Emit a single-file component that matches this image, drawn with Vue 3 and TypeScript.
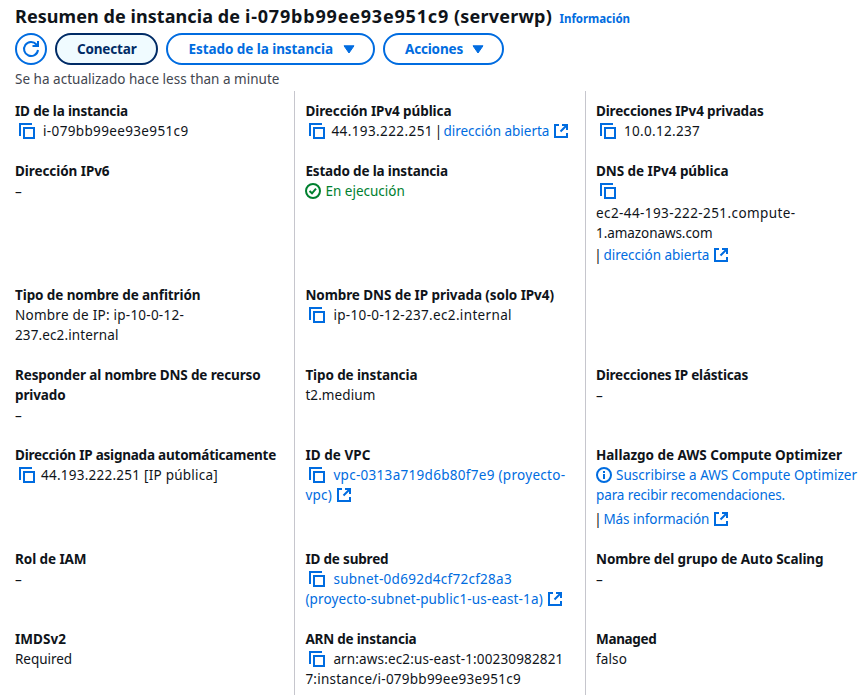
<script setup lang="ts">
type Kind = 'text' | 'link' | 'ok' | 'bar' | 'dash' | 'copy' | 'external' | 'info' | 'check'
interface Part {
  kind: Kind
  text?: string
  width?: number
  gap?: number
}
interface Line {
  parts: Part[]
  above?: number
}
interface Field {
  label: [string, number][]
  lines: Line[]
}

const t = (text: string, width: number, gap = 0): Part => ({ kind: 'text', text, width, gap })
const a = (text: string, width: number, gap = 0): Part => ({ kind: 'link', text, width, gap })
const bar = (gap = 0): Part => ({ kind: 'bar', text: '|', gap })
const icon = (kind: Kind, gap = 0): Part => ({ kind, gap })
const line = (...parts: Part[]): Line => ({ parts })
const spaced = (above: number, ...parts: Part[]): Line => ({ parts, above })
const dash: Line = line({ kind: 'dash', text: '–' })

// Tracks a run of text so that it fills its nominal width.
const vFit = {
  mounted(el: HTMLElement, binding: { value?: number }) {
    if (!binding.value) return
    const natural = el.getBoundingClientRect().width
    const count = (el.textContent ?? '').length
    if (count > 1) el.style.letterSpacing = `${(binding.value - natural) / count}px`
  },
}

const title: [string, number][] = [
  ['Resumen de instancia de', 225],
  ['i-079bb99ee93e951c9', 204],
  ['(serverwp)', 98],
]

const fields: Field[] = [
  { label: [['ID de la instancia', 113]], lines: [line(icon('copy', 4), t('i-079bb99ee93e951c9', 145.5, 8))] },
  {
    label: [['Dirección IPv4 pública', 146]],
    lines: [line(icon('copy', 4), t('44.193.222.251', 101.5, 6), bar(3.5), a('dirección abierta', 106, 3), icon('external', 4.5))],
  },
  { label: [['Direcciones IPv4 privadas', 167.5]], lines: [line(icon('copy', 4), t('10.0.12.237', 76, 8))] },

  { label: [['Dirección IPv6', 94.5]], lines: [dash] },
  {
    label: [['Estado de la instancia', 142.5]],
    lines: [line(icon('check'), { kind: 'ok', text: 'En ejecución', width: 79.5, gap: 4 })],
  },
  {
    label: [['DNS de IPv4 pública', 132.5]],
    lines: [
      line(icon('copy', 4)),
      spaced(2, t('ec2-44-193-222-251.compute-', 199.5)),
      line(t('1.amazonaws.com', 116.5)),
      spaced(2, bar(), a('dirección abierta', 106, 3.4), icon('external', 4.6)),
    ],
  },

  {
    label: [['Tipo de nombre de anfitrión', 185.5]],
    lines: [line(t('Nombre de IP: ip-10-0-12-', 169)), line(t('237.ec2.internal', 103.5))],
  },
  {
    label: [['Nombre DNS de IP privada (solo IPv4)', 248.5]],
    lines: [line(icon('copy', 4), t('ip-10-0-12-237.ec2.internal', 178.5, 8))],
  },
  { label: [], lines: [] },

  { label: [['Responder al nombre DNS de recurso', 245.5], ['privado', 50.5]], lines: [dash] },
  { label: [['Tipo de instancia', 112]], lines: [line(t('t2.medium', 70))] },
  { label: [['Direcciones IP elásticas', 152]], lines: [dash] },

  {
    label: [['Dirección IP asignada automáticamente', 261]],
    lines: [line(icon('copy', 4), t('44.193.222.251 [IP pública]', 177, 6))],
  },
  {
    label: [['ID de VPC', 65]],
    lines: [
      line(icon('copy', 4), a('vpc-0313a719d6b80f7e9 (proyecto-', 232, 8)),
      line(a('vpc)', 26.5), icon('external', 5)),
    ],
  },
  {
    label: [['Hallazgo de AWS Compute Optimizer', 246]],
    lines: [
      line(icon('info'), a('Suscribirse a AWS Compute Optimizer', 241, 4)),
      line(a('para recibir recomendaciones.', 189)),
      spaced(4, bar(), a('Más información', 106, 3.4), icon('external', 4.6)),
    ],
  },

  { label: [['Rol de IAM', 71.5]], lines: [dash] },
  {
    label: [['ID de subred', 83]],
    lines: [
      line(icon('copy', 4), a('subnet-0d692d4cf72cf28a3', 178.5, 8)),
      line(a('(proyecto-subnet-public1-us-east-1a)', 237.5), icon('external', 5)),
    ],
  },
  { label: [['Nombre del grupo de Auto Scaling', 227.5]], lines: [dash] },

  { label: [['IMDSv2', 51]], lines: [line(t('Required', 57))] },
  {
    label: [['ARN de instancia', 111]],
    lines: [
      line(icon('copy', 4), t('arn:aws:ec2:us-east-1:00230982821', 230, 8)),
      line(t('7:instance/i-079bb99ee93e951c9', 215.5)),
    ],
  },
  { label: [['Managed', 60.5]], lines: [line(t('falso', 31))] },
]
</script>

<template>
  <main class="page">
    <header>
      <div class="heading">
        <h1><span v-for="[text, width] in title" :key="text" v-fit="width">{{ text }}</span></h1>
        <a class="info-link"><span v-fit="70.5">Información</span></a>
      </div>
      <div class="actions">
        <button class="btn round" aria-label="Actualizar">
          <svg width="18" height="18" viewBox="0 0 18 18" fill="none" stroke="currentColor" stroke-width="2">
            <path d="M16 10A7 7 0 1 1 14.4 4.5L16 6.2" />
            <path d="M16 1V6H10.5" />
          </svg>
        </button>
        <button class="btn connect"><span v-fit="59.5">Conectar</span></button>
        <button class="btn state">
          <span v-fit="144.5">Estado de la instancia</span>
          <svg width="12" height="9" viewBox="0 0 12 9"><path d="M1 .8h10L6 8z" fill="currentColor" stroke="currentColor" stroke-linejoin="round" /></svg>
        </button>
        <button class="btn menu">
          <span v-fit="58">Acciones</span>
          <svg width="12" height="9" viewBox="0 0 12 9"><path d="M1 .8h10L6 8z" fill="currentColor" stroke="currentColor" stroke-linejoin="round" /></svg>
        </button>
      </div>
      <p class="updated"><span v-fit="264.5">Se ha actualizado hace less than a minute</span></p>
    </header>

    <section class="grid">
      <div v-for="(field, i) in fields" :key="i" class="cell">
        <div v-for="[text, width] in field.label" :key="text" class="line label">
          <span v-fit="width">{{ text }}</span>
        </div>
        <div v-for="(row, j) in field.lines" :key="j" class="line" :style="{ marginTop: (row.above ?? 0) + 'px' }">
          <span v-for="(part, k) in row.parts" :key="k" class="part" :style="{ marginLeft: (part.gap ?? 0) + 'px' }">
            <svg v-if="part.kind === 'copy'" class="blue" width="16" height="16" viewBox="0 0 16 16" fill="none" stroke="currentColor" stroke-width="2">
              <path d="M1 13V1H13" />
              <path d="M5 5H15V15H5Z" />
            </svg>
            <svg v-else-if="part.kind === 'external'" class="blue" width="14" height="14" viewBox="0 0 14 14" fill="none" stroke="currentColor" stroke-width="2">
              <path d="M5 1H1V13H13V9" />
              <path d="M8 1H13V6M13 1L6.5 7.5" />
            </svg>
            <svg v-else-if="part.kind === 'info'" class="blue" width="16" height="16" viewBox="0 0 16 16" fill="none" stroke="currentColor" stroke-width="2">
              <circle cx="8" cy="8" r="7" />
              <path d="M8 4V6M8 7V12" />
            </svg>
            <svg v-else-if="part.kind === 'check'" class="green" width="16" height="16" viewBox="0 0 16 16" fill="none" stroke="currentColor" stroke-width="2">
              <circle cx="8" cy="8" r="7" />
              <path d="M4.5 8L7 10.3L11 5.6" />
            </svg>
            <span v-else v-fit="part.width" :class="part.kind">{{ part.text }}</span>
          </span>
        </div>
      </div>
    </section>
  </main>
</template>

<style>
body {
  margin: 0;
  background: #fff;
}
</style>

<style scoped>
.page {
  box-sizing: border-box;
  width: 868px;
  height: 695px;
  overflow: hidden;
  font: 13.5px/20px 'Noto Sans', sans-serif;
  color: #0f141a;
  background: #fff;
}
header {
  height: 91px;
  padding: 4px 0 0 15px;
  box-sizing: border-box;
}
.heading {
  display: flex;
  align-items: baseline;
  gap: 7.5px;
  height: 29px;
}
h1 {
  display: flex;
  gap: 5px;
  margin: 0;
  font-size: 18px;
  line-height: 24px;
  font-weight: 700;
}
span {
  white-space: nowrap;
}
.info-link {
  color: #006ce0;
  font-size: 11.5px;
  font-weight: 700;
}
.actions {
  display: flex;
  gap: 8px;
}
.btn {
  box-sizing: border-box;
  display: flex;
  align-items: center;
  height: 32px;
  padding: 0 20px;
  border: 2px solid #006ce0;
  border-radius: 16px;
  background: #fff;
  color: #006ce0;
  font: 700 13.5px/20px 'Noto Sans', sans-serif;
}
.round {
  width: 32px;
  padding: 0;
  justify-content: center;
}
.connect {
  width: 103px;
  border-color: #002b66;
  background: #f0fbff;
  color: #002b66;
}
.state {
  width: 209px;
  padding-left: 20.5px;
  gap: 9.5px;
}
.menu {
  width: 121px;
  gap: 9px;
}
.updated {
  margin: 4px 0 0;
  color: #424650;
}
.grid {
  display: grid;
  grid-template-columns: 294px 291px 283px;
  grid-template-rows: 70px 124px 80px 80px 104px 80px 66px;
}
.cell {
  padding-left: 10.4px;
  border-left: 1px solid #c6c6cd;
}
.cell:nth-child(3n) {
  padding-left: 10px;
}
.cell:nth-child(3n + 1) {
  padding-left: 15px;
  border-left: 0;
}
.cell:nth-child(-n + 3) {
  padding-top: 10px;
}
.line {
  display: flex;
  height: 20px;
}
.label {
  font-weight: 700;
}
.part {
  display: flex;
  align-items: center;
  flex: none;
}
.bar {
  display: flex;
  justify-content: center;
  width: 4px;
}
.dash {
  padding-top: 2px;
}
svg {
  display: block;
  flex: none;
}
.blue,
.link {
  color: #006ce0;
}
.green,
.ok {
  color: #00802f;
}
</style>
